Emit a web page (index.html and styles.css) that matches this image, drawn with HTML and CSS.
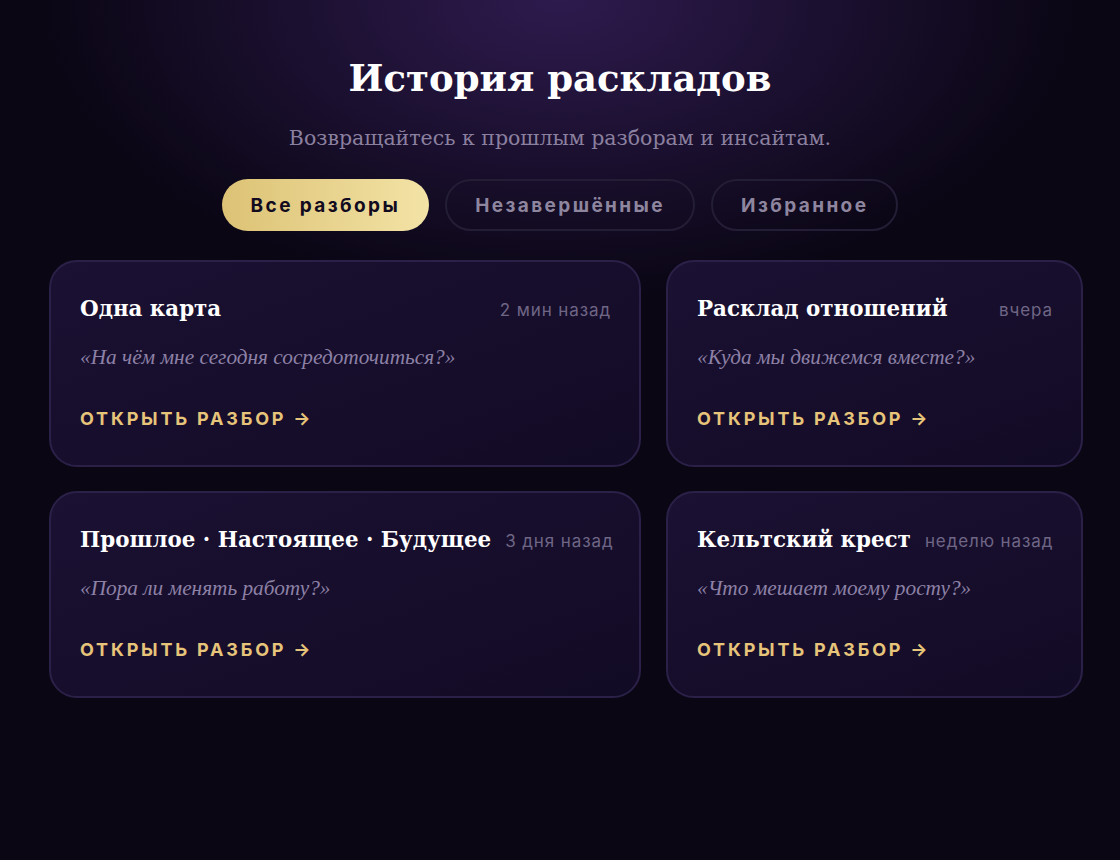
FILE: index.html
```html
<!DOCTYPE html>
<html lang="ru">
<head>
<meta charset="utf-8">
<title>История раскладов</title>
<link rel="stylesheet" href="styles.css">
</head>
<body>
<div class="page">
    <h1 class="titulo">История раскладов</h1>
    <p class="subtitulo">Возвращайтесь к прошлым разборам и инсайтам.</p>

    <div class="abas">
        <button class="aba ativa">Все разборы</button>
        <button class="aba">Незавершённые</button>
        <button class="aba">Избранное</button>
    </div>

    <div class="grade">
        <div class="cartao">
            <div class="cabecalho">
                <span class="nome">Одна карта</span>
                <span class="quando">2 мин назад</span>
            </div>
            <div class="pergunta">«На чём мне сегодня сосредоточиться?»</div>
            <a class="abrir" href="#">Открыть разбор →</a>
        </div>

        <div class="cartao">
            <div class="cabecalho">
                <span class="nome">Расклад отношений</span>
                <span class="quando">вчера</span>
            </div>
            <div class="pergunta">«Куда мы движемся вместе?»</div>
            <a class="abrir" href="#">Открыть разбор →</a>
        </div>

        <div class="cartao">
            <div class="cabecalho">
                <span class="nome">Прошлое · Настоящее · Будущее</span>
                <span class="quando">3 дня назад</span>
            </div>
            <div class="pergunta">«Пора ли менять работу?»</div>
            <a class="abrir" href="#">Открыть разбор →</a>
        </div>

        <div class="cartao">
            <div class="cabecalho">
                <span class="nome">Кельтский крест</span>
                <span class="quando">неделю назад</span>
            </div>
            <div class="pergunta">«Что мешает моему росту?»</div>
            <a class="abrir" href="#">Открыть разбор →</a>
        </div>
    </div>
</div>
</body>
</html>
```

FILE: styles.css
```css
html, body{
    margin: 0;
    height: 100%;
}

body{
    background-color: #0a0614;
    background-image: radial-gradient(ellipse 520px 300px at 560px 0, rgba(52, 30, 88, 0.85), rgba(10, 6, 20, 0) 100%);
    background-repeat: no-repeat;
    color: #fff;
    font-family: "DejaVu Serif", "Liberation Serif", serif;
}

.page{
    padding: 52px 37px 0 49px;
}

.titulo{
    margin: 0 0 0 -12px;
    text-align: center;
    font-size: 37px;
    line-height: 52px;
    font-weight: bold;
}

.subtitulo{
    margin: 20px 0 0 -12px;
    text-align: center;
    font-size: 20.5px;
    line-height: 28px;
    color: #8b809f;
}

.abas{
    display: flex;
    justify-content: center;
    gap: 16px;
    margin: 27px 0 0 -12px;
}

.aba{
    height: 52px;
    padding: 0 28px;
    border-radius: 26px;
    border: 2px solid #241d36;
    background: transparent;
    color: #8e869f;
    font-family: "Inter", "Roboto", sans-serif;
    font-size: 19px;
    font-weight: bold;
    letter-spacing: 2.4px;
    cursor: pointer;
}

.aba.ativa{
    border: none;
    padding: 0 29px;
    background: linear-gradient(90deg, #dcc275, #f3e3a6);
    color: #120a1e;
}

.grade{
    display: grid;
    grid-template-columns: 592px 417px;
    column-gap: 25px;
    row-gap: 24px;
    margin-top: 29px;
}

.cartao{
    border: 2px solid #2b2148;
    border-radius: 28px;
    background: linear-gradient(160deg, #1b1133, #120b25);
    padding: 31px 28px 35px 29px;
}

.cabecalho{
    display: flex;
    justify-content: space-between;
    align-items: baseline;
    gap: 14px;
}

.nome{
    font-size: 21.4px;
    line-height: 32px;
    font-weight: bold;
    color: #fff;
    white-space: nowrap;
}

.quando{
    font-family: "Inter", "Roboto", sans-serif;
    font-size: 17px;
    color: #6f6686;
    white-space: nowrap;
    letter-spacing: 0.9px;
}

.pergunta{
    margin-top: 19px;
    font-family: "Liberation Serif", serif;
    font-size: 21.3px;
    line-height: 27px;
    font-style: italic;
    color: #8d81a6;
}

.abrir{
    display: inline-block;
    margin-top: 37px;
    font-family: "Inter", "Roboto", sans-serif;
    font-size: 18px;
    line-height: 22px;
    font-weight: bold;
    letter-spacing: 2.8px;
    text-transform: uppercase;
    color: #e6c47a;
    text-decoration: none;
}
```
